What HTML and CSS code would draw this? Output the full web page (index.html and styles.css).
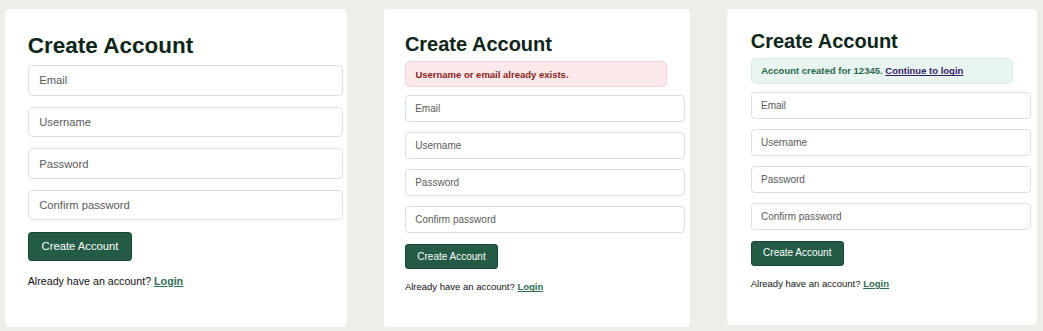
FILE: index.html
```html
<!DOCTYPE html>
<html lang="en">
<head>
<meta charset="utf-8">
<title>Create Account</title>
<link rel="stylesheet" href="styles.css">
</head>
<body>
<main class="board">
  <section class="card card-a">
    <h1 class="title">Create Account</h1>
    <form class="form">
      <input class="field" type="email" placeholder="Email">
      <input class="field" type="text" placeholder="Username">
      <input class="field" type="password" placeholder="Password">
      <input class="field" type="password" placeholder="Confirm password">
      <button class="submit" type="button">Create Account</button>
    </form>
    <p class="footer">Already have an account? <a class="login" href="#">Login</a></p>
  </section>

  <section class="card card-b">
    <h1 class="title">Create Account</h1>
    <div class="alert alert-error">Username or email already exists.</div>
    <form class="form">
      <input class="field" type="email" placeholder="Email">
      <input class="field" type="text" placeholder="Username">
      <input class="field" type="password" placeholder="Password">
      <input class="field" type="password" placeholder="Confirm password">
      <button class="submit" type="button">Create Account</button>
    </form>
    <p class="footer">Already have an account? <a class="login" href="#">Login</a></p>
  </section>

  <section class="card card-c">
    <h1 class="title">Create Account</h1>
    <div class="alert alert-success">Account created for 12345.&nbsp;<a class="continue" href="#">Continue to login</a></div>
    <form class="form">
      <input class="field" type="email" placeholder="Email">
      <input class="field" type="text" placeholder="Username">
      <input class="field" type="password" placeholder="Password">
      <input class="field" type="password" placeholder="Confirm password">
      <button class="submit" type="button">Create Account</button>
    </form>
    <p class="footer">Already have an account? <a class="login" href="#">Login</a></p>
  </section>
</main>
</body>
</html>
```

FILE: styles.css
```css
* {
  box-sizing: border-box;
}

html, body {
  margin: 0;
  padding: 0;
  background: #eeede7;
  font-family: "Liberation Sans", Arial, sans-serif;
}

.board {
  display: flex;
  align-items: flex-start;
  gap: 36.5px;
  padding: 9px 0 0 5px;
  width: 1043px;
  height: 331px;
  overflow: hidden;
}

.card {
  flex: none;
  background: #ffffff;
  border-radius: 4px;
  display: flex;
  flex-direction: column;
  align-items: flex-start;
}

.card-a {
  zoom: 1.125;
  width: 304px;
  height: 283px;
  padding: 21.6px 0 0 20.2px;
}

.card-b {
  width: 306.7px;
  height: 318px;
  padding: 24px 0 0 21.4px;
}

.card-c {
  width: 310px;
  height: 316px;
  padding: 20.7px 0 0 24px;
}

.title {
  margin: 0 0 5.3px;
  font-size: 20px;
  line-height: 23px;
  font-weight: 700;
  color: #0e2519;
}

.alert {
  width: 262px;
  height: 26px;
  margin-bottom: 8px;
  padding: 0 9.5px;
  display: flex;
  align-items: center;
  border-radius: 5px;
  font-size: 9.5px;
  font-weight: 700;
}

.alert-error {
  background: #fce9e9;
  border: 1px solid #f4d2d2;
  color: #8a1d1d;
}

.alert-success {
  background: #e8f5f0;
  border: 1px solid #d8ece4;
  color: #2a684d;
}

.continue {
  color: #37206a;
  text-decoration: underline;
}

.form {
  display: flex;
  flex-direction: column;
  align-items: flex-start;
  gap: 10px;
  margin: 0;
}

.field {
  width: 280px;
  height: 27px;
  margin: 0;
  padding: 0 9.3px;
  border: 1px solid #dedede;
  border-radius: 4px;
  background: #ffffff;
  font-family: "Liberation Sans", Arial, sans-serif;
  font-size: 10px;
  color: #333;
  outline: none;
}

.field::placeholder {
  color: #5a5a5a;
  opacity: 1;
}

.submit {
  margin-top: 0.7px;
  height: 25.5px;
  padding: 0 11.4px;
  border: 1px solid #1a4434;
  border-radius: 3px;
  background: #245b45;
  color: #ffffff;
  font-family: "Liberation Sans", Arial, sans-serif;
  font-size: 10px;
  line-height: 1;
  cursor: pointer;
}

.footer {
  margin: 12px 0 0;
  font-size: 9.5px;
  line-height: 11px;
  color: #111111;
}

.login {
  color: #2f6d54;
  font-weight: 700;
  text-decoration: underline;
}
```
